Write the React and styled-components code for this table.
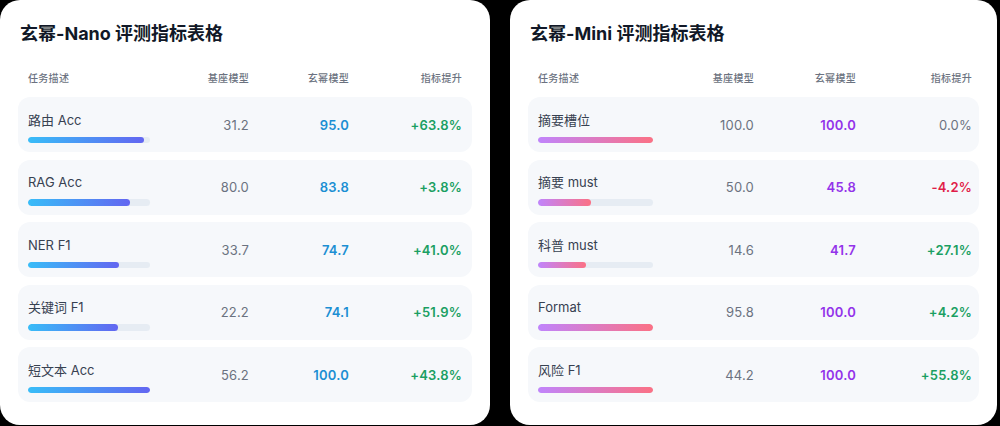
import React from 'react';
import styled, { createGlobalStyle } from 'styled-components';

const GlobalStyle = createGlobalStyle`
  html, body {
    margin: 0;
    padding: 0;
    background: #000000;
  }
  body {
    font-family: "Inter", "Noto Sans CJK SC", sans-serif;
  }
`;

const Page = styled.div`
  display: flex;
  gap: 20px;
  width: 1000px;
  height: 426px;
  background: #000000;
`;

const Card = styled.section`
  width: ${(p) => p.$width}px;
  height: 425px;
  box-sizing: border-box;
  background: #ffffff;
  border-radius: 20px;
  padding: 22px 18px 0;
`;

const Title = styled.h2`
  margin: 0 0 21px 2px;
  font-size: 18px;
  line-height: 24px;
  font-weight: 700;
  color: #111827;
`;

const Grid = styled.div`
  display: grid;
  grid-template-columns: ${(p) => p.$cols};
  align-items: center;
  padding: 0 10px;
`;

const HeadRow = styled(Grid)`
  height: 20px;
  margin-bottom: 10px;
`;

const HeadCell = styled.div`
  font-size: 10px;
  font-weight: 500;
  letter-spacing: 0.3px;
  color: #6b7280;
  text-align: ${(p) => (p.$left ? 'left' : 'right')};
`;

const Rows = styled.div`
  display: flex;
  flex-direction: column;
  gap: 7.5px;
`;

const Row = styled(Grid)`
  height: 55px;
  background: #f6f8fb;
  border-radius: 12px;
`;

const LabelCell = styled.div`
  display: flex;
  flex-direction: column;
  gap: 8px;
  padding-top: 5px;
`;

const Label = styled.div`
  font-size: 13px;
  line-height: 18px;
  color: #374151;
`;

const Track = styled.div`
  width: ${(p) => p.$width}px;
  height: 6.5px;
  border-radius: 4px;
  background: #e6ecf3;
  overflow: hidden;
`;

const Fill = styled.div`
  height: 100%;
  border-radius: 4px;
  background: linear-gradient(90deg, ${(p) => p.$from}, ${(p) => p.$to});
`;

const Value = styled.div`
  font-size: 13px;
  text-align: right;
  letter-spacing: 0.2px;
  color: ${(p) => p.$color};
  font-weight: ${(p) => (p.$bold ? 600 : 400)};
`;

const deltaColor = (d) => {
  if (d.startsWith('+')) return '#1a9f62';
  if (d.startsWith('-')) return '#e11d48';
  return '#6b7280';
};

const cards = [
  {
    title: '玄幂-Nano 评测指标表格',
    width: 490,
    cols: '131px 90px 100px 113px',
    bar: 122,
    from: '#38bdf8',
    to: '#6366f1',
    accent: '#1b8fd3',
    rows: [
      ['路由 Acc', '31.2', '95.0', '+63.8%'],
      ['RAG Acc', '80.0', '83.8', '+3.8%'],
      ['NER F1', '33.7', '74.7', '+41.0%'],
      ['关键词 F1', '22.2', '74.1', '+51.9%'],
      ['短文本 Acc', '56.2', '100.0', '+43.8%'],
    ],
  },
  {
    title: '玄幂-Mini 评测指标表格',
    width: 487,
    cols: '126px 90px 102px 116px',
    bar: 115,
    from: '#c084fc',
    to: '#fb7185',
    accent: '#9333ea',
    rows: [
      ['摘要槽位', '100.0', '100.0', '0.0%'],
      ['摘要 must', '50.0', '45.8', '-4.2%'],
      ['科普 must', '14.6', '41.7', '+27.1%'],
      ['Format', '95.8', '100.0', '+4.2%'],
      ['风险 F1', '44.2', '100.0', '+55.8%'],
    ],
  },
];

const MetricCard = ({ card }) => (
  <Card $width={card.width}>
    <Title>{card.title}</Title>
    <HeadRow $cols={card.cols}>
      <HeadCell $left>任务描述</HeadCell>
      <HeadCell>基座模型</HeadCell>
      <HeadCell>玄幂模型</HeadCell>
      <HeadCell>指标提升</HeadCell>
    </HeadRow>
    <Rows>
      {card.rows.map(([label, base, ours, delta]) => (
        <Row key={label} $cols={card.cols}>
          <LabelCell>
            <Label>{label}</Label>
            <Track $width={card.bar}>
              <Fill
                $from={card.from}
                $to={card.to}
                style={{ width: `${Math.min(parseFloat(ours), 100)}%` }}
              />
            </Track>
          </LabelCell>
          <Value $color="#6b7280">{base}</Value>
          <Value $color={card.accent} $bold>{ours}</Value>
          <Value $color={deltaColor(delta)} $bold={delta !== '0.0%'}>{delta}</Value>
        </Row>
      ))}
    </Rows>
  </Card>
);

export default function App() {
  return (
    <>
      <GlobalStyle />
      <Page>
        {cards.map((c) => (
          <MetricCard key={c.title} card={c} />
        ))}
      </Page>
    </>
  );
}
